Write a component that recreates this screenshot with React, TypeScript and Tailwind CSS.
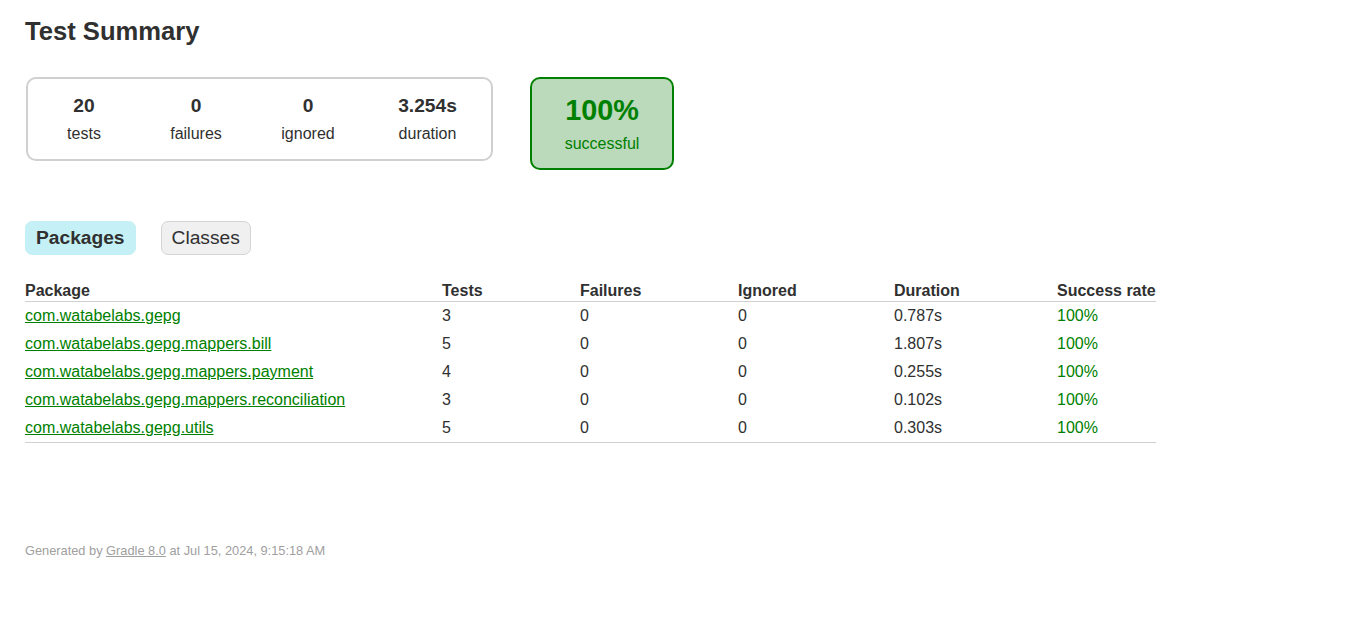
import React from "react";

const rows = [
  { name: "com.watabelabs.gepg", tests: 3, dur: "0.787s" },
  { name: "com.watabelabs.gepg.mappers.bill", tests: 5, dur: "1.807s" },
  { name: "com.watabelabs.gepg.mappers.payment", tests: 4, dur: "0.255s" },
  { name: "com.watabelabs.gepg.mappers.reconciliation", tests: 3, dur: "0.102s" },
  { name: "com.watabelabs.gepg.utils", tests: 5, dur: "0.303s" },
];

function Counter({ value, label, w }: { value: string; label: string; w: string }) {
  return (
    <div className={`${w} pt-[16px] pb-[16px] text-center`}>
      <div className="text-[19.2px] font-bold leading-[22px] mb-[8px]">{value}</div>
      <div className="text-[16px] leading-[18px]">{label}</div>
    </div>
  );
}

export default function App() {
  return (
    <div className="min-h-[624px] bg-white text-[#303030] font-['Liberation_Sans',Arial,sans-serif] text-[16px] pl-[25px] pr-[25px] pt-[17px]">
      <h1 className="text-[25.6px] font-bold leading-[29px] whitespace-nowrap">Test Summary</h1>

      <div className="flex items-start mt-[31px]">
        <div className="flex border-2 border-[#d0d0d0] rounded-[10px] ml-[1px]">
          <Counter value="20" label="tests" w="w-[112px]" />
          <Counter value="0" label="failures" w="w-[112px]" />
          <Counter value="0" label="ignored" w="w-[112px]" />
          <Counter value="3.254s" label="duration" w="w-[127px]" />
        </div>
        <div className="ml-[37px] w-[144px] border-2 border-[#008000] bg-[#bbd9bb] rounded-[10px] py-[15px] text-center text-[#008000]">
          <div className="text-[28.8px] font-bold leading-[33px] mb-[8px]">100%</div>
          <div className="text-[16px] leading-[18px]">successful</div>
        </div>
      </div>

      <div className="flex mt-[51px]">
        <div className="mr-[25px] px-[10px] py-[5px] rounded-[7px] border border-[#c5f0f5] bg-[#c5f0f5] text-[19.2px] font-bold leading-[22px]">
          Packages
        </div>
        <div className="px-[10px] py-[5px] rounded-[7px] border border-[#d4d4d4] bg-[#f0f0f0] text-[19.2px] leading-[22px]">
          Classes
        </div>
      </div>

      <table className="mt-[26px] border-collapse border-b border-[#d0d0d0] table-fixed w-[1131px]">
        <colgroup>
          <col className="w-[417px]" />
          <col className="w-[138px]" />
          <col className="w-[158px]" />
          <col className="w-[156px]" />
          <col className="w-[163px]" />
          <col className="w-[99px]" />
        </colgroup>
        <thead>
          <tr className="border-b border-[#d0d0d0]">
            <th className="text-left font-bold whitespace-nowrap p-0 leading-[20px]">Package</th>
            <th className="text-left font-bold whitespace-nowrap p-0 leading-[20px]">Tests</th>
            <th className="text-left font-bold whitespace-nowrap p-0 leading-[20px]">Failures</th>
            <th className="text-left font-bold whitespace-nowrap p-0 leading-[20px]">Ignored</th>
            <th className="text-left font-bold whitespace-nowrap p-0 leading-[20px]">Duration</th>
            <th className="text-left font-bold whitespace-nowrap p-0 leading-[20px]">Success rate</th>
          </tr>
        </thead>
        <tbody>
          {rows.map((r) => (
            <tr key={r.name}>
              <td className="whitespace-nowrap py-[5px] px-0 leading-[18px]">
                <a href="#" className="text-[#008000] underline">{r.name}</a>
              </td>
              <td className="whitespace-nowrap py-[5px] px-0 leading-[18px]">{r.tests}</td>
              <td className="whitespace-nowrap py-[5px] px-0 leading-[18px]">0</td>
              <td className="whitespace-nowrap py-[5px] px-0 leading-[18px]">0</td>
              <td className="whitespace-nowrap py-[5px] px-0 leading-[18px]">{r.dur}</td>
              <td className="whitespace-nowrap py-[5px] px-0 leading-[18px] text-[#008000]">100%</td>
            </tr>
          ))}
        </tbody>
      </table>

      <div className="mt-[100px] text-[12.8px] leading-[15px] text-[#a0a0a0] whitespace-nowrap">
        Generated by <a href="#" className="underline text-[#a0a0a0]">Gradle 8.0</a> at Jul 15, 2024, 9:15:18 AM
      </div>
    </div>
  );
}
